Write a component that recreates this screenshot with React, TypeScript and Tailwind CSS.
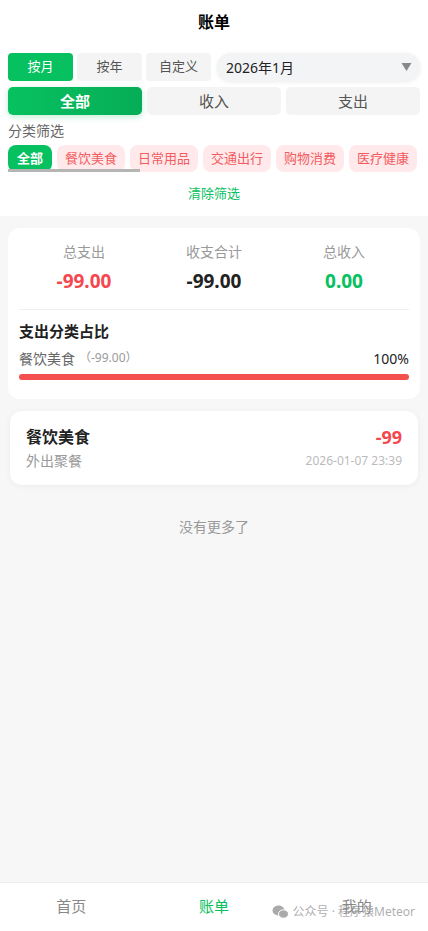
const font = { fontFamily: '"Noto Sans", "Noto Sans CJK SC", sans-serif' };

const chips = ["餐饮美食", "日常用品", "交通出行", "购物消费", "医疗健康"];

export default function App() {
  return (
    <div style={font} className="relative flex h-[931px] w-[428px] flex-col overflow-hidden bg-[#f7f7f7]">
      <div className="bg-white pb-[13px]">
        <div className="flex h-[44px] items-center justify-center text-[16px] font-bold text-black">账单</div>

        <div className="flex items-center gap-[4px] px-[8px] pt-[9px]">
          <button className="h-[28px] w-[65px] rounded-[4px] bg-[#07c160] text-[13px] text-white">按月</button>
          <button className="h-[28px] w-[65px] rounded-[4px] bg-[#f4f4f4] text-[13px] text-[#555]">按年</button>
          <button className="h-[28px] w-[65px] rounded-[4px] bg-[#f4f4f4] text-[13px] text-[#555]">自定义</button>
          <div className="ml-[2px] flex h-[28px] flex-1 items-center justify-between rounded-full bg-[#f3f4f6] pl-[9px] pr-[8px] shadow-[0_1px_4px_rgba(0,0,0,0.08)]">
            <span className="text-[14px] text-[#222]">2026年1月</span>
            <svg width="11" height="10" viewBox="0 0 11 10"><path d="M0.5 1 L10.5 1 L5.5 9 Z" fill="#888" /></svg>
          </div>
        </div>

        <div className="flex gap-[5px] px-[8px] pt-[6px]">
          <button className="h-[28px] flex-1 rounded-[5px] bg-gradient-to-r from-[#07c160] to-[#06ad56] text-[15px] font-bold text-white shadow-[0_2px_6px_rgba(7,193,96,0.25)]">全部</button>
          <button className="h-[28px] flex-1 rounded-[5px] bg-[#f4f4f4] text-[15px] text-[#555]">收入</button>
          <button className="h-[28px] flex-1 rounded-[5px] bg-[#f4f4f4] text-[15px] text-[#555]">支出</button>
        </div>

        <div className="px-[8px] pt-[6px] text-[14px] leading-[20px] text-[#666]">分类筛选</div>

        <div className="relative mt-[4px] flex gap-[5px] overflow-hidden px-[8px]">
          <span className="flex h-[27px] shrink-0 items-center rounded-[8px] bg-[#07c160] px-[9px] text-[13px] font-bold text-white">全部</span>
          {chips.map((c) => (
            <span key={c} className="flex h-[27px] w-[68px] shrink-0 items-center justify-center rounded-[8px] bg-[#ffe9ea] text-[13px] text-[#f35b5f]">
              {c}
            </span>
          ))}
          <div className="absolute bottom-0 left-[8px] h-[3px] w-[132px] bg-[#b5b5b5]" />
        </div>

        <div className="pt-[11px] text-center text-[13px] leading-[20px] text-[#07c160]">清除筛选</div>
      </div>

      <div className="mx-[8px] mt-[12px] rounded-[12px] bg-white px-[11px] pb-[19px] pt-[13px]">
        <div className="grid grid-cols-3 text-center">
          <div>
            <div className="text-[14px] leading-[22px] text-[#999]">总支出</div>
            <div className="mt-[4px] text-[19px] font-bold text-[#f5474e]">-99.00</div>
          </div>
          <div>
            <div className="text-[14px] leading-[22px] text-[#999]">收支合计</div>
            <div className="mt-[4px] text-[19px] font-bold text-[#222]">-99.00</div>
          </div>
          <div>
            <div className="text-[14px] leading-[22px] text-[#999]">总收入</div>
            <div className="mt-[4px] text-[19px] font-bold text-[#07c160]">0.00</div>
          </div>
        </div>
        <div className="mt-[13px] h-px bg-[#eee]" />
        <div className="mt-[10px] text-[15px] font-bold leading-[22px] text-[#222]">支出分类占比</div>
        <div className="mt-[6px] flex items-center justify-between">
          <div className="flex items-center">
            <span className="text-[14px] text-[#666]">餐饮美食</span>
            <span className="ml-[4px] text-[12px] text-[#999]">（-99.00）</span>
          </div>
          <span className="text-[14px] text-[#222]">100%</span>
        </div>
        <div className="mt-[5px] h-[6px] rounded-full bg-[#f55050]" />
      </div>

      <div className="mx-[10px] mt-[12px] flex items-center justify-between rounded-[12px] bg-white px-[16px] py-[14px] shadow-[0_1px_6px_rgba(0,0,0,0.05)]">
        <div>
          <div className="text-[16px] font-bold leading-[24px] text-[#222]">餐饮美食</div>
          <div className="mt-[2px] text-[14px] leading-[20px] text-[#999]">外出聚餐</div>
        </div>
        <div className="text-right">
          <div className="text-[18px] font-bold leading-[24px] text-[#f5474e]">-99</div>
          <div className="mt-[2px] text-[12px] leading-[20px] text-[#bbb]">2026-01-07 23:39</div>
        </div>
      </div>

      <div className="mt-[31px] text-center text-[14px] text-[#999]">没有更多了</div>

      <div className="mt-auto flex h-[49px] items-center border-t border-[#eee] bg-white pb-[2px]">
        <div className="flex-1 text-center text-[15px] text-[#888]">首页</div>
        <div className="flex-1 text-center text-[15px] text-[#07c160]">账单</div>
        <div className="flex-1 text-center text-[15px] text-[#888]">我的</div>
      </div>

      <div className="absolute bottom-[10px] right-[13px] flex items-center gap-[4px] text-[12px] text-[#999]/80">
        <svg width="17" height="14" viewBox="0 0 17 14">
          <ellipse cx="6.5" cy="5.5" rx="6" ry="5" fill="#aaa" />
          <ellipse cx="11.5" cy="9" rx="5" ry="4.2" fill="#aaa" stroke="white" strokeWidth="1" />
        </svg>
        <span>公众号 · 程序猿Meteor</span>
      </div>
    </div>
  );
}
